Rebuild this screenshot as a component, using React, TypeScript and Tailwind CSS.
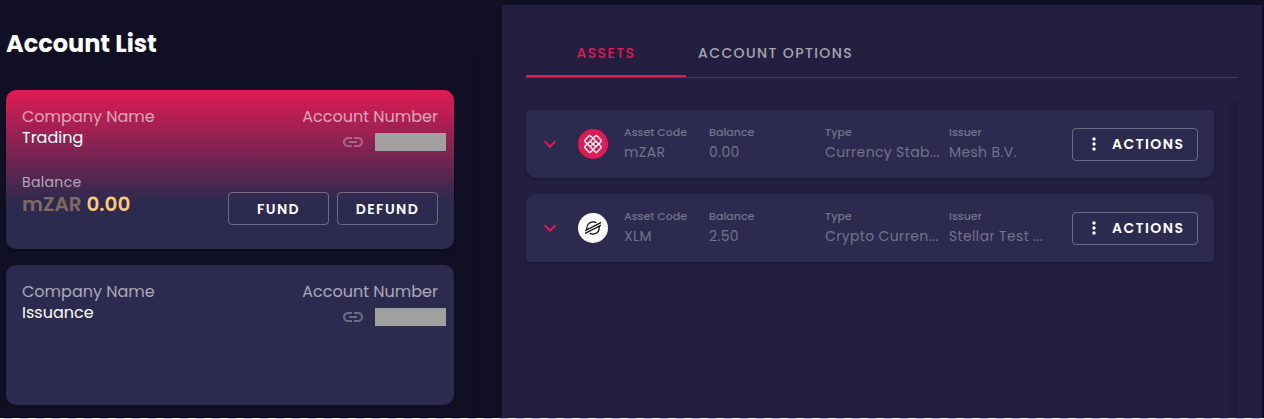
import { MdExpandMore, MdLink, MdMoreVert } from 'react-icons/md';
import { SiStellar } from 'react-icons/si';

interface Account {
    company: string;
    balance?: string;
    currency?: string;
}

interface Asset {
    code: string;
    balance: string;
    type: string;
    issuer: string;
}

const accounts: Account[] = [
    { company: 'Trading', balance: '0.00', currency: 'mZAR' },
    { company: 'Issuance' },
];

const assets: Asset[] = [
    { code: 'mZAR', balance: '0.00', type: 'Currency Stab...', issuer: 'Mesh B.V.' },
    { code: 'XLM', balance: '2.50', type: 'Crypto Curren...', issuer: 'Stellar Test ...' },
];

const outlined = 'h-[33px] rounded border border-white/30 text-sm font-semibold tracking-widest text-white cursor-pointer';

const MeshLogo = () => (
    <svg viewBox="0 0 30 30" className="size-[30px] shrink-0" aria-hidden="true">
        <circle cx="15" cy="15" r="15" fill="#e01b54" />
        <g transform="rotate(45 15 15)" fill="none" stroke="#fff" strokeWidth="1.4">
            <rect x="11" y="6.5" width="8" height="17" rx="1.2" />
            <rect x="6.5" y="11" width="17" height="8" rx="1.2" />
            <path d="M15 11v8M11 15h8" />
        </g>
    </svg>
);

const StellarLogo = () => (
    <div className="flex items-center justify-center size-[30px] shrink-0 rounded-full bg-white text-black">
        <SiStellar size={16} />
    </div>
);

const AccountCard = ({ company, balance, currency }: Account) => (
    <li
        className={`flex flex-col gap-6 px-4 pt-4 pb-6 rounded-[10px] shadow-[0_1px_3px_rgba(0,0,0,0.4)] ${
            balance ? 'bg-linear-to-b/srgb from-[#e01b54] to-[#2d2a4f] to-70%' : 'min-h-[140px] bg-[#2d2a4f]'
        }`}
    >
        <div className="flex justify-between text-base/[21px]">
            <div>
                <div className="text-white/60">Company Name</div>
                <div className="text-white">{company}</div>
            </div>
            <div className="flex flex-col items-end">
                <div className="text-white/60">Account Number</div>
                <div className="flex items-center gap-2.5 h-[21px] -mr-2 pt-2">
                    <a href="#explorer" aria-label="View account" className="text-white/30">
                        <MdLink size={24} />
                    </a>
                    <span className="w-[71px] h-[18px] bg-[#a0a0a0]" />
                </div>
            </div>
        </div>
        {balance && (
            <div className="flex justify-between">
                <div>
                    <div className="text-sm/5 tracking-wide text-white/60">Balance</div>
                    <div className="text-xl/6 font-semibold text-[#ffc979]">
                        <span className="opacity-40">{currency}</span> {balance}
                    </div>
                </div>
                <div className="flex gap-2 pt-5">
                    <button type="button" className={`w-[101px] ${outlined}`}>FUND</button>
                    <button type="button" className={`w-[101px] ${outlined}`}>DEFUND</button>
                </div>
            </div>
        )}
    </li>
);

const Field = ({ label, value }: { label: string; value: string }) => (
    <div className="min-w-0 whitespace-nowrap text-white/35">
        <dt className="text-[11px]/5 font-medium">{label}</dt>
        <dd className="text-sm/5 tracking-wide">{value}</dd>
    </div>
);

const AssetRow = ({ code, balance, type, issuer }: Asset) => (
    <li className="flex items-center gap-4 h-[68px] pl-3 pr-4 bg-[#2d2a4f] rounded-[10px] first:rounded-t last:rounded-b shadow-[0_1px_3px_rgba(0,0,0,0.4)]">
        <button type="button" aria-label={`Expand ${code}`} className="text-[#e01b54] cursor-pointer">
            <MdExpandMore size={24} />
        </button>
        {code === 'XLM' ? <StellarLogo /> : <MeshLogo />}
        <dl className="grid grid-cols-[85fr_116fr_124fr_107fr] flex-1 pb-1">
            <Field label="Asset Code" value={code} />
            <Field label="Balance" value={balance} />
            <Field label="Type" value={type} />
            <Field label="Issuer" value={issuer} />
        </dl>
        <button type="button" className={`flex items-center pl-[11px] gap-2 w-[126px] ${outlined}`}>
            <MdMoreVert size={20} />
            ACTIONS
        </button>
    </li>
);

const App = () => (
    <div className="flex flex-col min-h-screen bg-[#110f24] font-['Poppins','Inter',sans-serif]">
        <main className="flex flex-1">
            <section className="flex w-[502px] shrink-0 pl-1.5 pr-6">
                <div className="flex-1 pt-7">
                    <h1 className="text-2xl/8 font-bold text-white">Account List</h1>
                    <ul className="flex flex-col gap-4 pt-[30px] pb-3">
                        {accounts.map((account) => (
                            <AccountCard key={account.company} {...account} />
                        ))}
                    </ul>
                </div>
                <div className="w-2 ml-4 mt-14 bg-[#0f0d21]" />
            </section>
            <section className="flex flex-col flex-1 mt-[5px] mr-0.5 px-6 pt-6 bg-[#241f40]">
                <div role="tablist" className="flex h-[49px] border-b border-white/15 text-sm font-medium tracking-widest">
                    <button type="button" role="tab" aria-selected="true" className="w-40 pt-0.5 border-b-2 border-[#e01b54] text-[#e01b54]">
                        ASSETS
                    </button>
                    <button type="button" role="tab" aria-selected="false" className="px-3 pt-0.5 border-b-2 border-transparent text-white/60">
                        ACCOUNT OPTIONS
                    </button>
                </div>
                <div className="flex flex-1 gap-4 pt-[23px]">
                    <ul className="flex flex-col flex-1 gap-4 pt-[9px]">
                        {assets.map((asset) => (
                            <AssetRow key={asset.code} {...asset} />
                        ))}
                    </ul>
                    <div className="w-2 bg-[#211c3b]" />
                </div>
            </section>
        </main>
        <div className="h-px bg-[repeating-linear-gradient(90deg,#fff_0_4px,#bbb_4px_12px,#fff_12px_16px)]" />
    </div>
);

export default App;
